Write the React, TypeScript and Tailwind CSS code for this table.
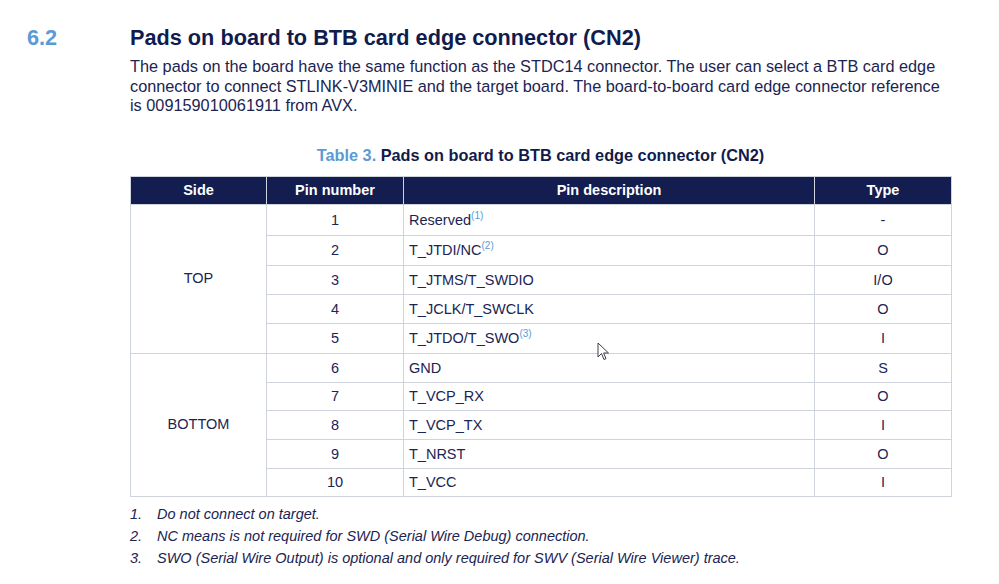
import React from "react";

const rows: { pin: string; desc: string; sup?: string; type: string; h: string }[] = [
  { pin: "1", desc: "Reserved", sup: "(1)", type: "-", h: "h-[31px]" },
  { pin: "2", desc: "T_JTDI/NC", sup: "(2)", type: "O", h: "h-[30px]" },
  { pin: "3", desc: "T_JTMS/T_SWDIO", type: "I/O", h: "h-[29px]" },
  { pin: "4", desc: "T_JCLK/T_SWCLK", type: "O", h: "h-[29px]" },
  { pin: "5", desc: "T_JTDO/T_SWO", sup: "(3)", type: "I", h: "h-[30px]" },
  { pin: "6", desc: "GND", type: "S", h: "h-[29px]" },
  { pin: "7", desc: "T_VCP_RX", type: "O", h: "h-[28.5px]" },
  { pin: "8", desc: "T_VCP_TX", type: "I", h: "h-[29px]" },
  { pin: "9", desc: "T_NRST", type: "O", h: "h-[28.5px]" },
  { pin: "10", desc: "T_VCC", type: "I", h: "h-[28px]" },
];

const bd = "border-[1.5px] border-[#cfd3db]";

export default function App() {
  return (
    <div
      className="w-[999px] h-[584px] bg-white overflow-hidden relative text-[#1b2452]"
      style={{ fontFamily: '"Liberation Sans", Arial, sans-serif' }}
    >
      <div className="flex pt-[26px]">
        <div className="w-[130px] pl-[27px] text-[21.7px] leading-[24px] font-bold text-[#5b9bd5]">6.2</div>
        <div className="w-[821px] flex flex-col">
          <h2 className="text-[21.7px] leading-[24px] font-bold text-[#101c4e] whitespace-nowrap">
            Pads on board to BTB card edge connector (CN2)
          </h2>
          <p className="mt-[7px] w-[821px] text-[16.3px] leading-[19.5px]">
            The pads on the board have the same function as the STDC14 connector. The user can select a BTB card edge
            connector to connect STLINK-V3MINIE and the target board. The board-to-board card edge connector reference
            is 009159010061911 from AVX.
          </p>
          <div className="mt-[29px] text-center text-[16.3px] leading-[20px] font-bold text-[#101c4e] whitespace-nowrap">
            <span className="text-[#5b9bd5]">Table 3.</span> Pads on board to BTB card edge connector (CN2)
          </div>
          <table className="mt-[11px] w-[821px] border-collapse text-[14.5px] table-fixed">
            <colgroup>
              <col className="w-[136px]" />
              <col className="w-[137px]" />
              <col className="w-[411px]" />
              <col className="w-[137px]" />
            </colgroup>
            <thead>
              <tr className="bg-[#131d4f] text-white font-bold h-[28px] text-[14.5px]">
                <th className={`${bd} text-center font-bold pt-[2px]`}>Side</th>
                <th className={`${bd} text-center font-bold pt-[2px]`}>Pin number</th>
                <th className={`${bd} text-center font-bold pt-[2px]`}>Pin description</th>
                <th className={`${bd} text-center font-bold pt-[2px]`}>Type</th>
              </tr>
            </thead>
            <tbody>
              {rows.map((r, i) => (
                <tr key={r.pin} className={r.h}>
                  {i === 0 && (
                    <td rowSpan={5} className={`${bd} text-center`}>
                      TOP
                    </td>
                  )}
                  {i === 5 && (
                    <td rowSpan={5} className={`${bd} text-center`}>
                      BOTTOM
                    </td>
                  )}
                  <td className={`${bd} text-center pt-[2px]`}>{r.pin}</td>
                  <td className={`${bd} pl-[5px] pt-[2px]`}>
                    {r.desc}
                    {r.sup && (
                      <span className="text-[10px] text-[#5b9bd5] relative top-[-6px] leading-none">{r.sup}</span>
                    )}
                  </td>
                  <td className={`${bd} text-center pt-[2px]`}>{r.type}</td>
                </tr>
              ))}
            </tbody>
          </table>
          <ol className="mt-[6px] italic text-[14.5px] leading-[22px]">
            {[
              "Do not connect on target.",
              "NC means is not required for SWD (Serial Wire Debug) connection.",
              "SWO (Serial Wire Output) is optional and only required for SWV (Serial Wire Viewer) trace.",
            ].map((t, i) => (
              <li key={i} className="flex">
                <span className="w-[27px]">{i + 1}.</span>
                <span>{t}</span>
              </li>
            ))}
          </ol>
        </div>
      </div>
      <svg
        className="absolute left-[597px] top-[342px]"
        width="13"
        height="19"
        viewBox="0 0 13 19"
      >
        <path
          d="M1 1 L1 15 L4.5 11.5 L7 17.5 L9 16.6 L6.6 11 L11.5 11 Z"
          fill="white"
          stroke="#3a3f4a"
          strokeWidth="1"
          strokeLinejoin="round"
        />
      </svg>
    </div>
  );
}
